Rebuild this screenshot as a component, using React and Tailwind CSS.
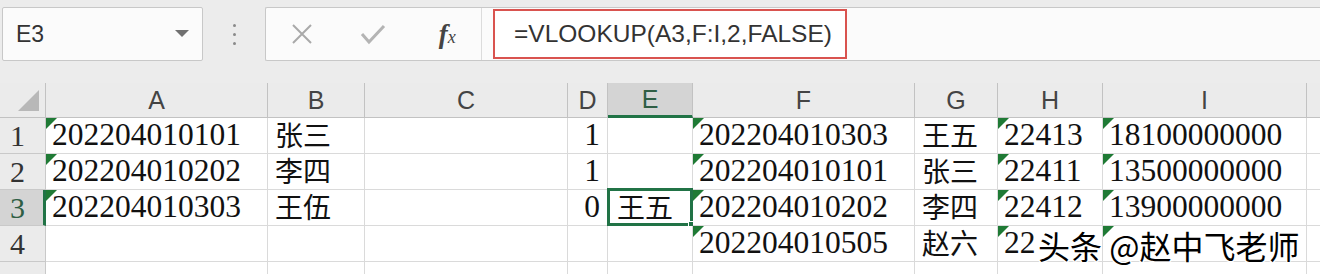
import React from "react";

const cols = [46, 222, 97, 203, 40, 85, 222, 83, 105, 204];
const letters = ["A", "B", "C", "D", "E", "F", "G", "H", "I"];

const rows = [
  [
    { t: "202204010101", tri: true },
    { t: "张三", cjk: true },
    {},
    { t: "1", right: true },
    {},
    { t: "202204010303", tri: true },
    { t: "王五", cjk: true },
    { t: "22413", tri: true },
    { t: "18100000000", tri: true },
  ],
  [
    { t: "202204010202", tri: true },
    { t: "李四", cjk: true },
    {},
    { t: "1", right: true },
    {},
    { t: "202204010101", tri: true },
    { t: "张三", cjk: true },
    { t: "22411", tri: true },
    { t: "13500000000", tri: true },
  ],
  [
    { t: "202204010303", tri: true },
    { t: "王伍", cjk: true },
    {},
    { t: "0", right: true },
    { t: "王五", cjk: true, sel: true },
    { t: "202204010202", tri: true },
    { t: "李四", cjk: true },
    { t: "22412", tri: true },
    { t: "13900000000", tri: true },
  ],
  [
    {},
    {},
    {},
    {},
    {},
    { t: "202204010505", tri: true },
    { t: "赵六", cjk: true },
    { t: "22", tri: true },
    { tri: true },
  ],
];

const Tri = () => (
  <span className="absolute left-0 top-0 w-0 h-0 border-t-[11px] border-r-[11px] border-t-[#1f7a35] border-r-transparent" />
);

const Cell = ({ c }) => (
  <div
    className={`relative h-[36px] border-r border-b border-[#dadada] bg-white flex items-end overflow-visible ${
      c.right ? "justify-end pr-[7px]" : "pl-[6px]"
    }`}
  >
    {c.tri && <Tri />}
    {c.t && (
      <span
        className={`leading-none whitespace-nowrap text-[#111] ${
          c.cjk ? "text-[28px] pb-[2px] pl-[1px]" : "text-[31.5px] pb-[3px]"
        } ${c.sel ? "pl-[3px]" : ""}`}
      >
        {c.t}
      </span>
    )}
    {c.sel && (
      <>
        <span className="absolute -left-[1px] -top-[2px] -right-[1px] -bottom-[1px] border-[3px] border-[#217346] pointer-events-none" />
        <span className="absolute -right-[5px] -bottom-[5px] w-[9px] h-[9px] bg-[#217346] border border-white" />
      </>
    )}
  </div>
);

const App = () => {
  return (
    <div
      className="relative w-[1320px] h-[274px] overflow-hidden bg-[#ececec]"
      style={{ fontFamily: '"Liberation Serif", "Noto Sans CJK SC", serif' }}
    >
      {/* formula bar */}
      <div
        className="h-[83px] flex items-start pt-[7px] pl-[2px]"
        style={{ fontFamily: '"Liberation Sans", "Noto Sans CJK SC", sans-serif' }}
      >
        <div className="w-[201px] h-[54px] bg-[#fbfbfb] border border-[#c8c8c8] rounded-[2px] flex items-center pl-[13px] pr-[13px]">
          <span className="text-[23px] text-[#333] flex-1">E3</span>
          <svg width="14" height="8" viewBox="0 0 14 8">
            <path d="M0 0 L14 0 L7 7 Z" fill="#707070" />
          </svg>
        </div>
        <div className="w-[62px] h-[54px] flex flex-col items-center justify-center gap-[6px]">
          <span className="w-[3px] h-[3px] rounded-full bg-[#8a8a8a]" />
          <span className="w-[3px] h-[3px] rounded-full bg-[#8a8a8a]" />
          <span className="w-[3px] h-[3px] rounded-full bg-[#8a8a8a]" />
        </div>
        <div className="flex-1 h-[54px] bg-[#fbfbfb] border border-r-0 border-[#c8c8c8] rounded-l-[2px] flex items-center">
          <div className="w-[216px] h-full flex items-center border-r border-[#dcdcdc]">
            <div className="w-[72px] flex justify-center">
              <svg width="22" height="22" viewBox="0 0 22 22">
                <path d="M2 2 L20 20 M20 2 L2 20" stroke="#a9a9a9" strokeWidth="2" fill="none" />
              </svg>
            </div>
            <div className="w-[72px] flex justify-center">
              <svg width="26" height="22" viewBox="0 0 26 22">
                <path d="M2 11 L9 19 L24 3" stroke="#b4b4b4" strokeWidth="3" fill="none" />
              </svg>
            </div>
            <div className="w-[72px] flex justify-center pl-[4px]">
              <span
                className="italic font-bold text-[#444] text-[27px] leading-none"
                style={{ fontFamily: '"Liberation Serif", serif' }}
              >
                f<span className="text-[18px] font-normal">x</span>
              </span>
            </div>
          </div>
          <div className="ml-[11px] w-[354px] h-[50px] bg-white border-2 border-[#d9534f] flex items-center pl-[19px]">
            <span className="text-[24.5px] text-[#333] whitespace-nowrap">=VLOOKUP(A3,F:I,2,FALSE)</span>
          </div>
        </div>
      </div>

      {/* sheet */}
      <div
        className="grid bg-white"
        style={{ gridTemplateColumns: `${cols.map((w) => w + "px").join(" ")} 1fr` }}
      >
        {/* header row */}
        <div className="h-[35px] bg-[#ebebeb] border-r border-b border-[#c2c2c2] flex items-end justify-end pr-[6px] pb-[6px]">
          <svg width="21" height="21" viewBox="0 0 21 21">
            <path d="M21 0 L21 21 L0 21 Z" fill="#b8b8b8" />
          </svg>
        </div>
        {letters.map((l) => (
          <div
            key={l}
            className={`relative h-[35px] border-r border-b flex items-center justify-center text-[25px] leading-none ${
              l === "E"
                ? "bg-[#d4d4d4] text-[#2f5e45] border-b-[3px] border-b-[#217346] border-r-[#c2c2c2]"
                : "bg-[#ebebeb] text-[#444] border-[#c2c2c2]"
            }`}
            style={{ fontFamily: '"Liberation Sans", sans-serif' }}
          >
            {l}
          </div>
        ))}
        <div className="h-[35px] bg-[#ebebeb] border-b border-[#c2c2c2]" />

        {rows.map((r, i) => (
          <React.Fragment key={i}>
            <div
              className={`h-[36px] border-r border-b border-[#c9c9c9] flex items-end pl-[10px] pb-[2px] text-[30px] leading-none ${
                i === 2 ? "bg-[#d4d4d4] text-[#2f5e45] border-r-[3px] border-r-[#217346]" : "bg-[#ebebeb] text-[#333]"
              }`}
            >
              {i + 1}
            </div>
            {r.map((c, j) => (
              <Cell key={j} c={c} />
            ))}
            <div className="h-[36px] border-b border-[#dadada] bg-white" />
          </React.Fragment>
        ))}

        <div className="h-[12px] bg-[#ebebeb] border-r border-[#c9c9c9]" />
        {letters.map((l) => (
          <div key={l} className="h-[12px] border-r border-[#dadada] bg-white" />
        ))}
        <div className="h-[12px] bg-white" />
      </div>

      {/* watermark */}
      <div
        className="absolute left-[1038px] top-[229px] text-[32px] leading-none text-black whitespace-nowrap pointer-events-none"
        style={{
          fontFamily: '"Noto Sans CJK SC", sans-serif',
          textShadow: "1px 1px 0 #fff, -1px -1px 0 #fff, 1px -1px 0 #fff, -1px 1px 0 #fff",
        }}
      >
        头条 @赵中飞老师
      </div>
    </div>
  );
};

export default App;
